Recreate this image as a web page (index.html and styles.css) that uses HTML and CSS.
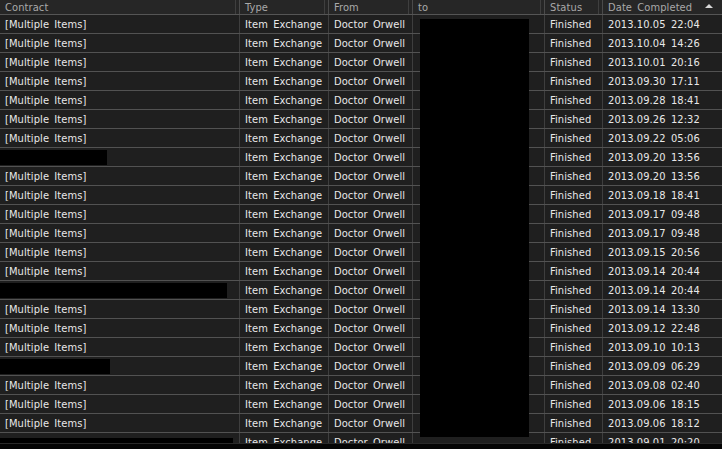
FILE: index.html
```html
<!DOCTYPE html>
<html>
<head>
<meta charset="utf-8">
<link rel="stylesheet" href="styles.css">
</head>
<body>
<div class="panel">
  <div class="list">
    <div class="row head">
      <div class="cell">Contract</div>
      <div class="cell">Type</div>
      <div class="cell">From</div>
      <div class="cell">to</div>
      <div class="cell">Status</div>
      <div class="cell last">Date Completed<span class="sort"></span></div>
    </div>
    <div class="row"><div class="cell">[Multiple Items]</div><div class="cell">Item Exchange</div><div class="cell">Doctor Orwell</div><div class="cell"></div><div class="cell">Finished</div><div class="cell last">2013.10.05 22:04</div></div>
    <div class="row"><div class="cell">[Multiple Items]</div><div class="cell">Item Exchange</div><div class="cell">Doctor Orwell</div><div class="cell"></div><div class="cell">Finished</div><div class="cell last">2013.10.04 14:26</div></div>
    <div class="row"><div class="cell">[Multiple Items]</div><div class="cell">Item Exchange</div><div class="cell">Doctor Orwell</div><div class="cell"></div><div class="cell">Finished</div><div class="cell last">2013.10.01 20:16</div></div>
    <div class="row"><div class="cell">[Multiple Items]</div><div class="cell">Item Exchange</div><div class="cell">Doctor Orwell</div><div class="cell"></div><div class="cell">Finished</div><div class="cell last">2013.09.30 17:11</div></div>
    <div class="row"><div class="cell">[Multiple Items]</div><div class="cell">Item Exchange</div><div class="cell">Doctor Orwell</div><div class="cell"></div><div class="cell">Finished</div><div class="cell last">2013.09.28 18:41</div></div>
    <div class="row"><div class="cell">[Multiple Items]</div><div class="cell">Item Exchange</div><div class="cell">Doctor Orwell</div><div class="cell"></div><div class="cell">Finished</div><div class="cell last">2013.09.26 12:32</div></div>
    <div class="row"><div class="cell">[Multiple Items]</div><div class="cell">Item Exchange</div><div class="cell">Doctor Orwell</div><div class="cell"></div><div class="cell">Finished</div><div class="cell last">2013.09.22 05:06</div></div>
    <div class="row"><div class="cell redacted"><span class="bar" style="width:107px"></span></div><div class="cell">Item Exchange</div><div class="cell">Doctor Orwell</div><div class="cell"></div><div class="cell">Finished</div><div class="cell last">2013.09.20 13:56</div></div>
    <div class="row"><div class="cell">[Multiple Items]</div><div class="cell">Item Exchange</div><div class="cell">Doctor Orwell</div><div class="cell"></div><div class="cell">Finished</div><div class="cell last">2013.09.20 13:56</div></div>
    <div class="row"><div class="cell">[Multiple Items]</div><div class="cell">Item Exchange</div><div class="cell">Doctor Orwell</div><div class="cell"></div><div class="cell">Finished</div><div class="cell last">2013.09.18 18:41</div></div>
    <div class="row"><div class="cell">[Multiple Items]</div><div class="cell">Item Exchange</div><div class="cell">Doctor Orwell</div><div class="cell"></div><div class="cell">Finished</div><div class="cell last">2013.09.17 09:48</div></div>
    <div class="row"><div class="cell">[Multiple Items]</div><div class="cell">Item Exchange</div><div class="cell">Doctor Orwell</div><div class="cell"></div><div class="cell">Finished</div><div class="cell last">2013.09.17 09:48</div></div>
    <div class="row"><div class="cell">[Multiple Items]</div><div class="cell">Item Exchange</div><div class="cell">Doctor Orwell</div><div class="cell"></div><div class="cell">Finished</div><div class="cell last">2013.09.15 20:56</div></div>
    <div class="row"><div class="cell">[Multiple Items]</div><div class="cell">Item Exchange</div><div class="cell">Doctor Orwell</div><div class="cell"></div><div class="cell">Finished</div><div class="cell last">2013.09.14 20:44</div></div>
    <div class="row"><div class="cell redacted"><span class="bar" style="width:227px"></span></div><div class="cell">Item Exchange</div><div class="cell">Doctor Orwell</div><div class="cell"></div><div class="cell">Finished</div><div class="cell last">2013.09.14 20:44</div></div>
    <div class="row"><div class="cell">[Multiple Items]</div><div class="cell">Item Exchange</div><div class="cell">Doctor Orwell</div><div class="cell"></div><div class="cell">Finished</div><div class="cell last">2013.09.14 13:30</div></div>
    <div class="row"><div class="cell">[Multiple Items]</div><div class="cell">Item Exchange</div><div class="cell">Doctor Orwell</div><div class="cell"></div><div class="cell">Finished</div><div class="cell last">2013.09.12 22:48</div></div>
    <div class="row"><div class="cell">[Multiple Items]</div><div class="cell">Item Exchange</div><div class="cell">Doctor Orwell</div><div class="cell"></div><div class="cell">Finished</div><div class="cell last">2013.09.10 10:13</div></div>
    <div class="row"><div class="cell redacted"><span class="bar" style="width:110px"></span></div><div class="cell">Item Exchange</div><div class="cell">Doctor Orwell</div><div class="cell"></div><div class="cell">Finished</div><div class="cell last">2013.09.09 06:29</div></div>
    <div class="row"><div class="cell">[Multiple Items]</div><div class="cell">Item Exchange</div><div class="cell">Doctor Orwell</div><div class="cell"></div><div class="cell">Finished</div><div class="cell last">2013.09.08 02:40</div></div>
    <div class="row"><div class="cell">[Multiple Items]</div><div class="cell">Item Exchange</div><div class="cell">Doctor Orwell</div><div class="cell"></div><div class="cell">Finished</div><div class="cell last">2013.09.06 18:15</div></div>
    <div class="row"><div class="cell">[Multiple Items]</div><div class="cell">Item Exchange</div><div class="cell">Doctor Orwell</div><div class="cell"></div><div class="cell">Finished</div><div class="cell last">2013.09.06 18:12</div></div>
    <div class="row"><div class="cell redacted"><span class="bar bottom" style="width:233px"></span></div><div class="cell">Item Exchange</div><div class="cell">Doctor Orwell</div><div class="cell"></div><div class="cell">Finished</div><div class="cell last">2013.09.01 20:20</div></div>
    <div class="cover"></div>
  </div>
  <div class="foot"></div>
</div>
</body>
</html>
```
FILE: styles.css
```css
html, body {
  margin: 0;
  padding: 0;
  background: #000;
}
body {
  width: 722px;
  height: 449px;
  overflow: hidden;
  font-family: "DejaVu Sans Condensed", "DejaVu Sans", sans-serif;
  font-size: 11px;
  color: #e8e8e8;
}
.panel {
  display: flex;
  flex-direction: column;
  height: 449px;
}
.list {
  position: relative;
  height: 443px;
  overflow: hidden;
  background: #1f1f1f;
}
.row {
  display: grid;
  grid-template-columns: 240px 89px 84px 132px 58px 119px;
  height: 18px;
  border-bottom: 1px solid #525252;
}
.cell {
  padding-left: 5px;
  line-height: 20px;
  height: 18px;
  white-space: nowrap;
  overflow: hidden;
  border-right: 1px solid #3e3e3e;
  word-spacing: 2px;
  letter-spacing: 0.1px;
}
.cell.last {
  border-right: none;
}
.row.head {
  height: 14px;
  background: #262626;
  border-bottom: 1px solid #555;
}
.head .cell {
  line-height: 15px;
  height: 14px;
  color: #a9a9a9;
  border-right: 1px solid #4a4a4a;
  background: linear-gradient(#3f3f3f, #3f3f3f) no-repeat right 3px top 0 / 1px 100%;
  position: relative;
}
.head .cell.last {
  border-right: none;
  background: none;
}
.sort {
  position: absolute;
  right: 9px;
  top: 4px;
  width: 0;
  height: 0;
  border-left: 4px solid transparent;
  border-right: 4px solid transparent;
  border-bottom: 4px solid #d8d8d8;
}
.cell.redacted {
  padding-left: 0;
  display: flex;
  align-items: center;
  overflow: visible;
}
.bar {
  display: block;
  height: 15px;
  background: #000;
  flex: none;
  position: relative;
  z-index: 1;
}
.bar.bottom {
  height: 18px;
  margin-top: 10px;
}
.cover {
  position: absolute;
  left: 420px;
  top: 19px;
  width: 109px;
  height: 418px;
  background: #000;
}
.foot {
  flex: 1;
  background: #050505;
  border-top: 1px solid #2a2a2a;
}
```
